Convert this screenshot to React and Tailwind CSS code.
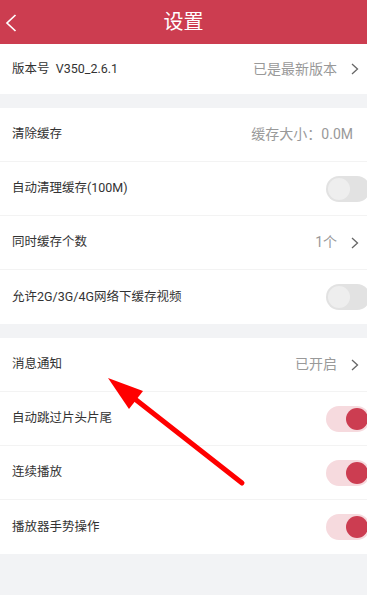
const font = { fontFamily: '"Roboto", "Noto Sans CJK SC", sans-serif' };

function Chevron() {
  return (
    <svg width="8" height="12" viewBox="0 0 8 12" className="ml-[14px]">
      <polyline points="1,1 6.5,6 1,11" fill="none" stroke="#666" strokeWidth="1.3" />
    </svg>
  );
}

function Toggle({ on }) {
  return (
    <div
      className={`relative w-[44px] h-[26px] rounded-full mr-[-11px] ${
        on ? "bg-[#f6dade]" : "bg-[#e2e2e2]"
      }`}
    >
      <div
        className={`absolute top-[2px] w-[22px] h-[22px] rounded-full ${
          on ? "right-[2px] bg-[#cc3d51]" : "left-[2px] bg-[#eeeeee]"
        }`}
      />
    </div>
  );
}

function Row({ label, value, arrow, toggle, last }) {
  return (
    <div
      className={`flex items-center justify-between h-[54px] pl-3 pr-[8px] ${
        last ? "" : "border-b border-[#f3f3f3]"
      }`}
    >
      <span className="text-[12.5px] text-[#333]">{label}</span>
      <div className="flex items-center">
        {value && (
          <span className={`text-[14px] text-[#999] ${arrow ? "" : "mr-[6px]"}`}>{value}</span>
        )}
        {arrow && <Chevron />}
        {toggle !== undefined && <Toggle on={toggle} />}
      </div>
    </div>
  );
}

export default function App() {
  return (
    <div className="relative w-[367px] h-[595px] overflow-hidden bg-[#f2f3f5]" style={font}>
      <div className="relative flex items-center justify-center h-[44px] bg-[#cc3d50]">
        <svg width="12" height="18" viewBox="0 0 12 18" className="absolute left-[5px] top-[14px]">
          <polyline points="10.5,1 2,9 10.5,17" fill="none" stroke="#fff" strokeWidth="1.7" />
        </svg>
        <span className="text-[20px] text-white">设置</span>
      </div>

      <div className="bg-white">
        <div className="flex items-center justify-between h-[50px] pl-3 pr-[8px]">
          <span className="text-[12.5px] text-[#333]">版本号&nbsp;&nbsp;V350_2.6.1</span>
          <div className="flex items-center">
            <span className="text-[14px] text-[#999]">已是最新版本</span>
            <Chevron />
          </div>
        </div>
      </div>

      <div className="mt-[14px] bg-white">
        <Row label="清除缓存" value="缓存大小：0.0M" />
        <Row label="自动清理缓存(100M)" toggle={false} />
        <Row label="同时缓存个数" value="1个" arrow />
        <Row label="允许2G/3G/4G网络下缓存视频" toggle={false} last />
      </div>

      <div className="mt-[14px] bg-white">
        <Row label="消息通知" value="已开启" arrow />
        <Row label="自动跳过片头片尾" toggle />
        <Row label="连续播放" toggle />
        <Row label="播放器手势操作" toggle last />
      </div>

      <svg className="absolute left-0 top-0 pointer-events-none" width="367" height="595">
        <line x1="242" y1="483" x2="126" y2="392" stroke="#ff0000" strokeWidth="5" strokeLinecap="round" />
        <polygon points="108,378 143,391 129,409" fill="#ff0000" />
      </svg>
    </div>
  );
}
